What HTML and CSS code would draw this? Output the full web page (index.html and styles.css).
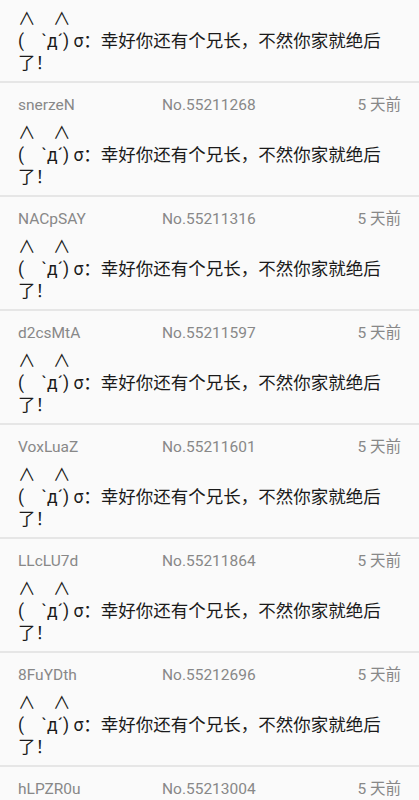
FILE: index.html
```html
<!DOCTYPE html>
<html lang="zh-CN">
<head>
    <meta charset="UTF-8">
    <meta name="viewport" content="width=device-width, initial-scale=1.0">
    <title>回复</title>
    <link rel="stylesheet" href="styles.css">
</head>
<body>
    <div class="thread">
        <div class="reply reply-first">
            <p class="content">∧　∧<br>(　`д´) σ：幸好你还有个兄长，不然你家就绝后了！</p>
        </div>
        <div class="reply">
            <div class="meta"><span class="user">snerzeN</span><span class="no">No.55211268</span><span class="time">5 天前</span></div>
            <p class="content">∧　∧<br>(　`д´) σ：幸好你还有个兄长，不然你家就绝后了！</p>
        </div>
        <div class="reply">
            <div class="meta"><span class="user">NACpSAY</span><span class="no">No.55211316</span><span class="time">5 天前</span></div>
            <p class="content">∧　∧<br>(　`д´) σ：幸好你还有个兄长，不然你家就绝后了！</p>
        </div>
        <div class="reply">
            <div class="meta"><span class="user">d2csMtA</span><span class="no">No.55211597</span><span class="time">5 天前</span></div>
            <p class="content">∧　∧<br>(　`д´) σ：幸好你还有个兄长，不然你家就绝后了！</p>
        </div>
        <div class="reply">
            <div class="meta"><span class="user">VoxLuaZ</span><span class="no">No.55211601</span><span class="time">5 天前</span></div>
            <p class="content">∧　∧<br>(　`д´) σ：幸好你还有个兄长，不然你家就绝后了！</p>
        </div>
        <div class="reply">
            <div class="meta"><span class="user">LLcLU7d</span><span class="no">No.55211864</span><span class="time">5 天前</span></div>
            <p class="content">∧　∧<br>(　`д´) σ：幸好你还有个兄长，不然你家就绝后了！</p>
        </div>
        <div class="reply">
            <div class="meta"><span class="user">8FuYDth</span><span class="no">No.55212696</span><span class="time">5 天前</span></div>
            <p class="content">∧　∧<br>(　`д´) σ：幸好你还有个兄长，不然你家就绝后了！</p>
        </div>
        <div class="reply">
            <div class="meta"><span class="user">hLPZR0u</span><span class="no">No.55213004</span><span class="time">5 天前</span></div>
            <p class="content">∧　∧<br>(　`д´) σ：幸好你还有个兄长，不然你家就绝后了！</p>
        </div>
    </div>
</body>
</html>
```

FILE: styles.css
```css
body {
    margin: 0;
    padding: 0;
    background-color: #fafafa;
    font-family: Roboto, "Noto Sans CJK SC", sans-serif;
    color: #1a1a1a;
    overflow: hidden;
}
.reply {
    padding: 12px 18px 7px;
    border-bottom: 2px solid #e6e6e6;
}
.reply-first {
    padding-top: 8px;
}
.meta {
    display: grid;
    grid-template-columns: 144px 1fr auto;
    font-size: 15.5px;
    line-height: 20px;
    color: #888888;
}
.content {
    margin: 7px 0 0;
    font-size: 17.5px;
    line-height: 22px;
}
.reply-first .content {
    margin-top: 0;
}
```
